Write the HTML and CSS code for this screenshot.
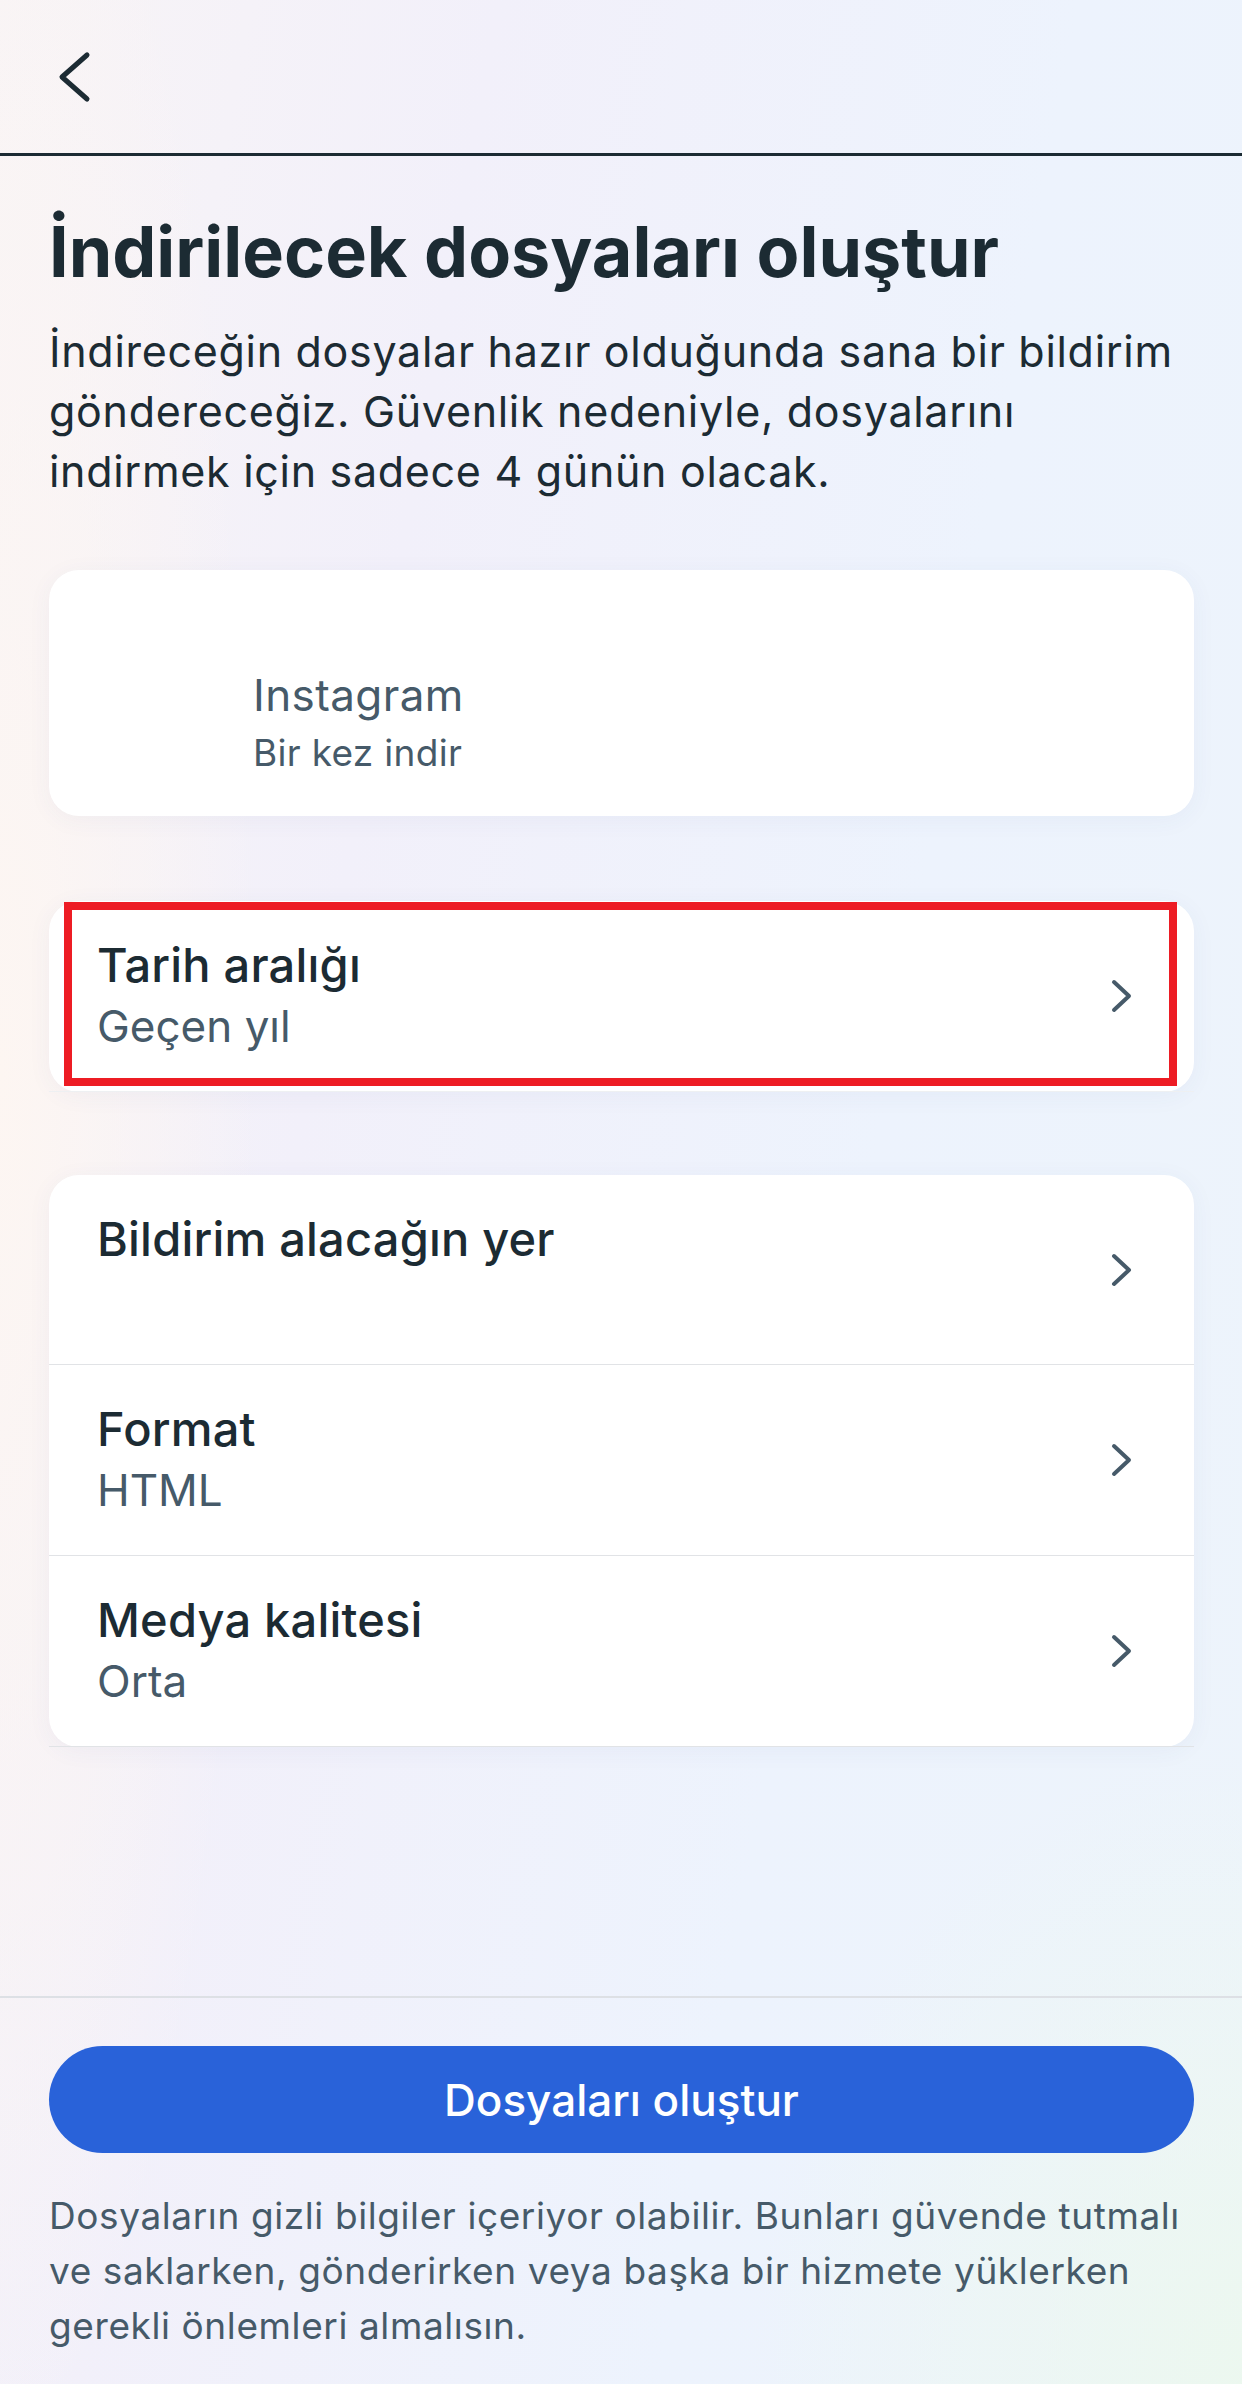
FILE: index.html
```html
<!DOCTYPE html>
<html lang="tr">
<head>
<meta charset="utf-8">
<title>İndirilecek dosyaları oluştur</title>
<link rel="stylesheet" href="styles.css">
</head>
<body>
<div class="page">
  <header class="topbar">
    <svg class="back" width="40" height="60" viewBox="0 0 40 60" aria-hidden="true">
      <path d="M33 8 L8 30 L33 52" fill="none" stroke="#1c2b33" stroke-width="5" stroke-linecap="round" stroke-linejoin="round"/>
    </svg>
  </header>

  <main class="content">
    <h1 class="title">İndirilecek dosyaları oluştur</h1>
    <p class="desc">İndireceğin dosyalar hazır olduğunda sana bir bildirim göndereceğiz. Güvenlik nedeniyle, dosyalarını indirmek için sadece 4 günün olacak.</p>

    <section class="card card-app">
      <div class="app-name">Instagram</div>
      <div class="app-sub">Bir kez indir</div>
    </section>

    <section class="card card-single">
      <div class="row">
        <div class="row-text">
          <div class="row-title">Tarih aralığı</div>
          <div class="row-sub">Geçen yıl</div>
        </div>
        <svg class="chev" width="24" height="36" viewBox="0 0 24 36" aria-hidden="true">
          <path d="M4 4 L19 18 L4 32" fill="none" stroke="#465a69" stroke-width="4" stroke-linecap="round" stroke-linejoin="round"/>
        </svg>
      </div>
      <div class="highlight"></div>
    </section>

    <section class="card card-list">
      <div class="row">
        <div class="row-text">
          <div class="row-title">Bildirim alacağın yer</div>
        </div>
        <svg class="chev" width="24" height="36" viewBox="0 0 24 36" aria-hidden="true">
          <path d="M4 4 L19 18 L4 32" fill="none" stroke="#465a69" stroke-width="4" stroke-linecap="round" stroke-linejoin="round"/>
        </svg>
      </div>
      <div class="row">
        <div class="row-text">
          <div class="row-title">Format</div>
          <div class="row-sub">HTML</div>
        </div>
        <svg class="chev" width="24" height="36" viewBox="0 0 24 36" aria-hidden="true">
          <path d="M4 4 L19 18 L4 32" fill="none" stroke="#465a69" stroke-width="4" stroke-linecap="round" stroke-linejoin="round"/>
        </svg>
      </div>
      <div class="row">
        <div class="row-text">
          <div class="row-title">Medya kalitesi</div>
          <div class="row-sub">Orta</div>
        </div>
        <svg class="chev" width="24" height="36" viewBox="0 0 24 36" aria-hidden="true">
          <path d="M4 4 L19 18 L4 32" fill="none" stroke="#465a69" stroke-width="4" stroke-linecap="round" stroke-linejoin="round"/>
        </svg>
      </div>
    </section>
  </main>

  <footer class="footer">
    <button class="primary" type="button">Dosyaları oluştur</button>
    <p class="note">Dosyaların gizli bilgiler içeriyor olabilir. Bunları güvende tutmalı ve saklarken, gönderirken veya başka bir hizmete yüklerken gerekli önlemleri almalısın.</p>
  </footer>
</div>
</body>
</html>
```

FILE: styles.css
```css
* { box-sizing: border-box; }

html, body {
  margin: 0;
  padding: 0;
}

body {
  width: 1242px;
  height: 2384px;
  overflow: hidden;
  font-family: Inter, "Noto Sans", "Liberation Sans", sans-serif;
  color: #1c2b33;
  background:
    radial-gradient(ellipse 700px 900px at 100% 100%, rgba(236, 248, 238, 0.9), rgba(236, 248, 238, 0) 70%),
    radial-gradient(ellipse 260px 1400px at 0% 45%, rgba(253, 246, 242, 1), rgba(253, 246, 242, 0) 100%),
    linear-gradient(100deg, #f8f4f6 0%, #f2f0fa 30%, #edf3fd 65%, #edf4fb 100%);
}

.page {
  height: 2384px;
  display: flex;
  flex-direction: column;
}

.topbar {
  height: 156px;
  border-bottom: 3px solid #1c2b33;
  display: flex;
  align-items: center;
  padding-left: 54px;
  flex: none;
}

.back { display: block; }

.content {
  padding: 0 48px 0 49px;
}

.title {
  margin: 54px 0 0;
  font-size: 70px;
  line-height: 84px;
  font-weight: 700;
  letter-spacing: 0;
  color: #1c2b33;
}

.desc {
  margin: 27px 0 0;
  padding-right: 17px;
  font-size: 43px;
  line-height: 60px;
  font-weight: 400;
  color: #1c2b33;
  letter-spacing: 0.7px;
}

.card {
  background: #ffffff;
  border-radius: 30px;
  box-shadow: 0 4px 24px rgba(60, 80, 140, 0.05);
  position: relative;
}

.card-app {
  margin-top: 69px;
  height: 246px;
  padding: 97px 0 0 204px;
  color: #465a69;
}

.app-name {
  font-size: 44px;
  line-height: 56px;
  letter-spacing: 0.4px;
}

.app-sub {
  font-size: 37px;
  line-height: 56px;
  margin-top: 2px;
  letter-spacing: 0.3px;
}

.card-single {
  margin-top: 85px;
}

.card-list {
  margin-top: 83px;
}

.row {
  min-height: 190px;
  padding: 34px 60px 0 48px;
  display: flex;
  align-items: center;
  border-bottom: 1px solid #e1e3e6;
}

.card-single .row { border-bottom-color: #eef0f2; }

.row-text {
  flex: 1;
  align-self: flex-start;
  padding-bottom: 35px;
}

.row-title {
  font-size: 47px;
  line-height: 60px;
  font-weight: 500;
  letter-spacing: 0.2px;
  color: #1c2b33;
}

.row-sub {
  margin-top: 1px;
  font-size: 44px;
  line-height: 60px;
  color: #465a69;
}

.chev {
  display: block;
  flex: none;
  margin-top: -34px;
}

.highlight {
  position: absolute;
  top: 1px;
  left: 15px;
  right: 17px;
  bottom: 6px;
  border: 8px solid #ed1c24;
  pointer-events: none;
}

.footer {
  margin-top: auto;
  height: 388px;
  border-top: 2px solid #dde0e5;
  padding: 48px 48px 0 49px;
}

.primary {
  display: block;
  width: 100%;
  height: 107px;
  border: none;
  border-radius: 54px;
  background: #2962d9;
  color: #ffffff;
  font-family: Inter, "Noto Sans", "Liberation Sans", sans-serif;
  font-size: 44px;
  font-weight: 500;
  cursor: pointer;
}

.note {
  margin: 35px 0 0;
  font-size: 37px;
  line-height: 55px;
  letter-spacing: 0.6px;
  color: #465a69;
}
```
